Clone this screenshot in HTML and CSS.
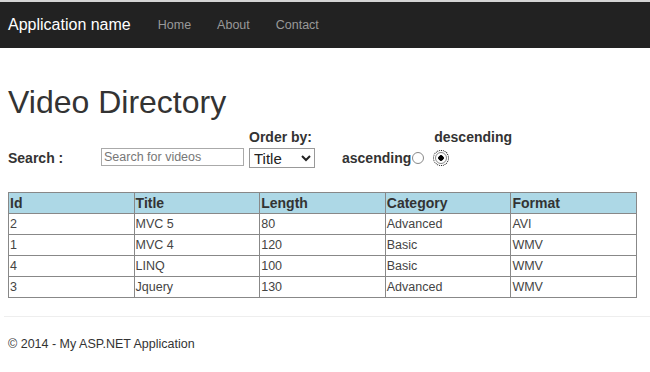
FILE: index.html
```html
<!DOCTYPE html>
<html>
<head>
    <meta charset="UTF-8">
    <title>Video Directory</title>
    <link rel="stylesheet" href="styles.css">
</head>
<body>
<div class="navbar">
    <a class="brand" href="#">Application name</a>
    <a class="navlink" href="#">Home</a>
    <a class="navlink" href="#">About</a>
    <a class="navlink" href="#">Contact</a>
</div>
<div class="content">
    <h1>Video Directory</h1>
    <form class="search-row">
        <label class="lbl search-lbl">Search :</label>
        <input class="search-box" type="text" placeholder="Search for videos">
        <div class="order">
            <label class="lbl">Order by:</label>
            <select class="order-select">
                <option>Title</option>
                <option>Length</option>
                <option>Category</option>
            </select>
        </div>
        <div class="asc">
            <label class="lbl">ascending</label><input class="radio" type="radio" name="dir">
        </div>
        <div class="desc">
            <label class="lbl">descending</label>
            <input class="radio focused" type="radio" name="dir" checked>
        </div>
    </form>
    <table class="videos">
        <tr>
            <th>Id</th>
            <th>Title</th>
            <th>Length</th>
            <th>Category</th>
            <th>Format</th>
        </tr>
        <tr><td>2</td><td>MVC 5</td><td>80</td><td>Advanced</td><td>AVI</td></tr>
        <tr><td>1</td><td>MVC 4</td><td>120</td><td>Basic</td><td>WMV</td></tr>
        <tr><td>4</td><td>LINQ</td><td>100</td><td>Basic</td><td>WMV</td></tr>
        <tr><td>3</td><td>Jquery</td><td>130</td><td>Advanced</td><td>WMV</td></tr>
    </table>
</div>
<hr class="rule">
<div class="footer">&copy; 2014 - My ASP.NET Application</div>
</body>
</html>
```

FILE: styles.css
```css
body{
    margin:0;
    font-family:"Liberation Sans", Arial, sans-serif;
    color:#333;
    background:#fff;
}
.navbar{
    display:flex;
    align-items:center;
    height:46px;
    border-top:2px solid #d4d4d4;
    background:#222;
    padding-left:8px;
}
.brand{
    font-size:16px;
    color:#fff;
    text-decoration:none;
    margin-right:14px;
}
.navlink{
    font-size:12.5px;
    color:#999;
    text-decoration:none;
    padding:0 13px;
}
.content{
    padding:0 8px;
}
h1{
    font-size:32px;
    font-weight:normal;
    margin:36px 0 9px;
    line-height:36px;
}
.search-row{
    display:flex;
    align-items:flex-end;
}
.lbl{
    font-size:14px;
    font-weight:bold;
    line-height:16px;
}
.search-lbl{
    width:93px;
    margin-bottom:2px;
}
.search-box{
    box-sizing:border-box;
    width:143px;
    height:18px;
    margin:0 0 2px;
    padding:0 2px;
    border:1px solid #aaa;
    font-family:"Liberation Sans", Arial, sans-serif;
    font-size:12.5px;
}
.search-box::placeholder{
    color:#777;
}
.order{
    display:flex;
    flex-direction:column;
    align-items:flex-start;
    margin-left:5px;
}
.order .lbl{
    margin-bottom:3px;
}
.order-select{
    width:66px;
    height:20px;
    border:1px solid #999;
    border-radius:0;
    background:#fff;
    font-family:"Liberation Sans", Arial, sans-serif;
    font-size:15px;
    color:#222;
    padding:0;
}
.asc{
    display:flex;
    align-items:center;
    margin-left:27px;
    margin-bottom:2px;
}
.desc{
    display:flex;
    flex-direction:column;
    align-items:flex-start;
    margin-left:10px;
    margin-bottom:4px;
}
.desc .lbl{
    margin-bottom:7px;
}
.radio{
    appearance:none;
    -webkit-appearance:none;
    width:12px;
    height:12px;
    margin:0 0 0 1px;
    border:1px solid #888;
    border-radius:50%;
    background:#fff;
}
.radio:checked{
    background:radial-gradient(circle, #000 0 2.5px, #fff 3px);
}
.focused{
    outline:1px dotted #000;
    outline-offset:1px;
}
.videos{
    width:629px;
    margin-top:24px;
    border-collapse:collapse;
    border:1px solid #777;
}
.videos th,.videos td{
    width:20%;
    border:1px solid #888;
    padding:0 1px;
    text-align:left;
}
.videos th{
    height:20px;
    background:#add8e6;
    font-size:14px;
    color:#333;
}
.videos td{
    height:20px;
    font-size:12.5px;
    color:#444;
}
.rule{
    margin:18px 0 0 4px;
    border:0;
    border-top:1px solid #eee;
}
.footer{
    padding:20px 8px;
    font-size:12.5px;
    color:#333;
}
```
